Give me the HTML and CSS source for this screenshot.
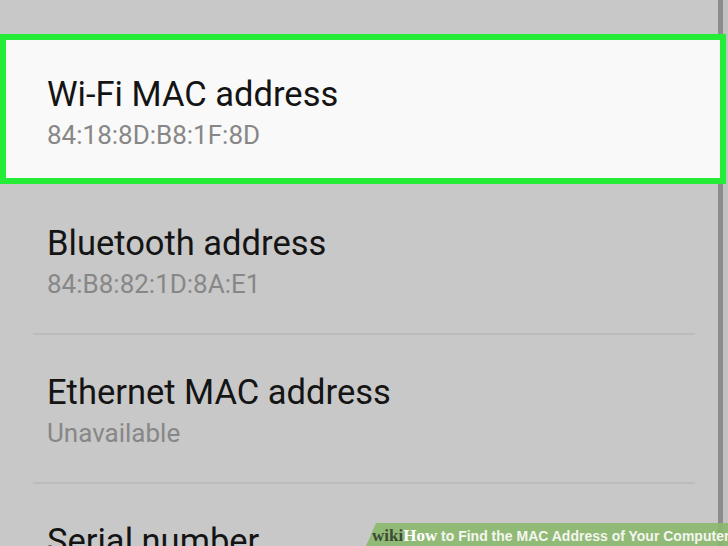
FILE: index.html
```html
<!DOCTYPE html>
<html>
<head>
	<meta charset="UTF-8">
	<meta name="viewport" content="width=device-width,user-scalable=no">
	<title>Status</title>
<link rel="stylesheet" href="styles.css">
</head>
<body>
	<section class="wrap">
		<ul class="list">
			<li class="item active">
				<span class="title">Wi-Fi MAC address</span>
				<span class="sub">84:18:8D:B8:1F:8D</span>
			</li>
			<li class="item">
				<span class="title">Bluetooth address</span>
				<span class="sub">84:B8:82:1D:8A:E1</span>
			</li>
			<li class="item line">
				<span class="title">Ethernet MAC address</span>
				<span class="sub">Unavailable</span>
			</li>
			<li class="item line">
				<span class="title">Serial number</span>
				<span class="sub">R58H82XXXXX</span>
			</li>
		</ul>
		<div class="bar"></div>
		<div class="mark"><b class="wiki">wiki</b><b class="how">How</b> to Find the MAC Address of Your Computer</div>
	</section>
</body>
</html>
```

FILE: styles.css
```css
html,body{
	margin: 0;
	overflow: hidden;
}
.wrap{
	width:728px;
	height:546px;
	position: relative;
	overflow: hidden;
	background:#c8c8c8;
	font-family: Roboto, "Noto Sans", sans-serif;
}
.list{
	padding: 34px 0 0;
	margin: 0;
}
.item{
	list-style: none;
	height:149px;
	box-sizing: border-box;
	padding: 39px 0 0 47px;
	display: flex;
	flex-direction: column;
}
.item.line{
	position: relative;
	padding-top:38px;
}
.item.line:before{
	content:'';
	position: absolute;
	left:33px;
	right:33px;
	top:-1px;
	height:2px;
	background:#bcbcbc;
}
.item + .item.line{
	margin-top:1px;
	height:148px;
}
.active{
	height:150px;
	width:726px;
	padding: 34px 0 0 41px;
	background:#f9f9f9;
	border:6px solid #25ec37;
	position: relative;
	z-index: 2;
}
.title{
	font-size:34.5px;
	line-height:40px;
	color:#141414;
}
.sub{
	font-size:26px;
	line-height:40px;
	margin-top:1px;
	color:#878787;
}
.bar{
	position: absolute;
	top:0;
	bottom:0;
	left:718px;
	width:5px;
	background:#8c8c8c;
}
.bar:after{
	content:'';
	position: absolute;
	top:0;
	bottom:0;
	left:5px;
	width:5px;
	background:#c2c2c2;
}
.mark{
	position: absolute;
	left:366px;
	right:0;
	bottom:0;
	height:23px;
	padding-left:6px;
	box-sizing: border-box;
	background:rgba(140,184,110,.9);
	clip-path: polygon(10px 0,100% 0,100% 100%,0 100%);
	color:#f4f6f0;
	font-family: "Liberation Sans", Arial, sans-serif;
	font-weight: bold;
	font-size:14px;
	line-height:25px;
	white-space: nowrap;
	z-index: 3;
}
.wiki,.how{
	font-family: "Liberation Serif", serif;
	font-size:17px;
}
.wiki{
	color:#3d4a35;
}
.how{
	color:#fff;
}
```
